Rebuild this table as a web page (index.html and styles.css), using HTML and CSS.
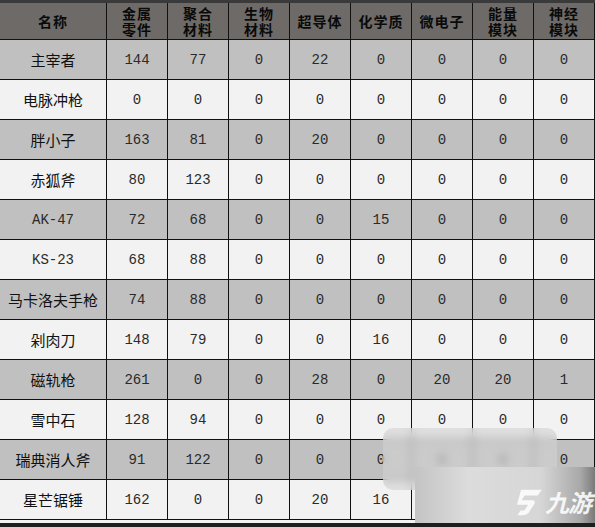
FILE: index.html
```html
<!DOCTYPE html>
<html lang="zh">
<head>
<meta charset="utf-8">
<link rel="stylesheet" href="styles.css">
</head>
<body>
<div class="page">
  <div class="table">
    <div class="row head">
      <div class="cell">名称</div>
      <div class="cell"><span class="ln">金属</span><span class="ln">零件</span></div>
      <div class="cell"><span class="ln">聚合</span><span class="ln">材料</span></div>
      <div class="cell"><span class="ln">生物</span><span class="ln">材料</span></div>
      <div class="cell">超导体</div>
      <div class="cell">化学质</div>
      <div class="cell">微电子</div>
      <div class="cell"><span class="ln">能量</span><span class="ln">模块</span></div>
      <div class="cell"><span class="ln">神经</span><span class="ln">模块</span></div>
    </div>
    <div class="row dark"><div class="cell name">主宰者</div><div class="cell">144</div><div class="cell">77</div><div class="cell">0</div><div class="cell">22</div><div class="cell">0</div><div class="cell">0</div><div class="cell">0</div><div class="cell">0</div></div>
    <div class="row light"><div class="cell name">电脉冲枪</div><div class="cell">0</div><div class="cell">0</div><div class="cell">0</div><div class="cell">0</div><div class="cell">0</div><div class="cell">0</div><div class="cell">0</div><div class="cell">0</div></div>
    <div class="row dark"><div class="cell name">胖小子</div><div class="cell">163</div><div class="cell">81</div><div class="cell">0</div><div class="cell">20</div><div class="cell">0</div><div class="cell">0</div><div class="cell">0</div><div class="cell">0</div></div>
    <div class="row light"><div class="cell name">赤狐斧</div><div class="cell">80</div><div class="cell">123</div><div class="cell">0</div><div class="cell">0</div><div class="cell">0</div><div class="cell">0</div><div class="cell">0</div><div class="cell">0</div></div>
    <div class="row dark"><div class="cell">AK-47</div><div class="cell">72</div><div class="cell">68</div><div class="cell">0</div><div class="cell">0</div><div class="cell">15</div><div class="cell">0</div><div class="cell">0</div><div class="cell">0</div></div>
    <div class="row light"><div class="cell">KS-23</div><div class="cell">68</div><div class="cell">88</div><div class="cell">0</div><div class="cell">0</div><div class="cell">0</div><div class="cell">0</div><div class="cell">0</div><div class="cell">0</div></div>
    <div class="row dark"><div class="cell name">马卡洛夫手枪</div><div class="cell">74</div><div class="cell">88</div><div class="cell">0</div><div class="cell">0</div><div class="cell">0</div><div class="cell">0</div><div class="cell">0</div><div class="cell">0</div></div>
    <div class="row light"><div class="cell name">剁肉刀</div><div class="cell">148</div><div class="cell">79</div><div class="cell">0</div><div class="cell">0</div><div class="cell">16</div><div class="cell">0</div><div class="cell">0</div><div class="cell">0</div></div>
    <div class="row dark"><div class="cell name">磁轨枪</div><div class="cell">261</div><div class="cell">0</div><div class="cell">0</div><div class="cell">28</div><div class="cell">0</div><div class="cell">20</div><div class="cell">20</div><div class="cell">1</div></div>
    <div class="row light"><div class="cell name">雪中石</div><div class="cell">128</div><div class="cell">94</div><div class="cell">0</div><div class="cell">0</div><div class="cell">0</div><div class="cell">0</div><div class="cell">0</div><div class="cell">0</div></div>
    <div class="row dark"><div class="cell name">瑞典消人斧</div><div class="cell">91</div><div class="cell">122</div><div class="cell">0</div><div class="cell">0</div><div class="cell">0</div><div class="cell">0</div><div class="cell">0</div><div class="cell">0</div></div>
    <div class="row light"><div class="cell name">星芒锯锤</div><div class="cell">162</div><div class="cell">0</div><div class="cell">0</div><div class="cell">20</div><div class="cell">16</div><div class="cell">0</div><div class="cell">0</div><div class="cell">0</div></div>
  </div>
  <div class="gap"></div>
  <div class="blur"></div>
  <div class="logo">
    <svg class="logo-mark" width="30" height="30" viewBox="0 0 32 30">
      <path d="M8 2 H30 L27 8 H13 L11 13 H22 Q27 13 25 18 L21 27 Q19 29 15 29 H10 L12 24 H16 L19 18 H7 Z" fill="#ffffff" opacity="0.85"/>
    </svg>
    <span class="logo-text">九游</span>
  </div>
</div>
</body>
</html>
```
FILE: styles.css
```css
html, body {
  margin: 0;
  padding: 0;
  background: #f2f2f2;
}
.page {
  position: relative;
  width: 595px;
  height: 527px;
  overflow: hidden;
  border-top: 3px solid #3a3a3a;
  box-sizing: border-box;
  background: #f2f2f2;
}
.table {
  display: flex;
  flex-direction: column;
}
.row {
  display: grid;
  grid-template-columns: 107px repeat(8, 61px);
  height: 40px;
}
.row.head {
  height: 37px;
  background: #6e6a67;
}
.row.dark { background: #c0c0c0; }
.row.light { background: #f2f2f2; }
.cell {
  box-sizing: border-box;
  border-right: 1px solid #111;
  border-bottom: 1px solid #111;
  display: flex;
  flex-direction: column;
  align-items: center;
  justify-content: center;
  text-align: center;
  font-family: "Liberation Mono", "DejaVu Sans Mono", monospace;
  font-size: 14px;
  color: #2a2a2a;
  padding-top: 1px;
}
.head .cell {
  font-family: "Noto Sans CJK SC", sans-serif;
  font-weight: bold;
  font-size: 14px;
  line-height: 16px;
  letter-spacing: 1px;
  color: #0a0a0a;
  padding-top: 0;
}
.ln {
  display: block;
  height: 16px;
  line-height: 16px;
}
.cell.name {
  font-family: "Noto Sans CJK SC", sans-serif;
  font-size: 15px;
  color: #111;
  padding-top: 0;
}
.gap {
  height: 3px;
}
.page::after {
  content: "";
  position: absolute;
  left: 0;
  right: 0;
  bottom: 0;
  height: 4px;
  background: #1e1e1e;
}
.blur {
  position: absolute;
  left: 383px;
  top: 425px;
  width: 174px;
  height: 62px;
  border-radius: 10px;
  background: rgba(210, 210, 210, 0.6);
  backdrop-filter: blur(4px);
}
.logo {
  position: absolute;
  left: 415px;
  top: 464px;
  width: 180px;
  height: 63px;
  background: linear-gradient(90deg, #c4c4c4 0%, #dcdcdc 30%, #d6d6d6 70%, #a8a8a8 92%, #7a7a7a 100%);
  display: flex;
  align-items: center;
  justify-content: flex-end;
  gap: 4px;
  padding-right: 4px;
  padding-top: 6px;
  box-sizing: border-box;
}
.logo-mark {
  transform: skewX(-12deg);
}
.logo-text {
  font-family: "Noto Sans CJK SC", sans-serif;
  font-weight: bold;
  font-style: italic;
  font-size: 24px;
  color: rgba(255, 255, 255, 0.9);
  letter-spacing: -1px;
}
```
